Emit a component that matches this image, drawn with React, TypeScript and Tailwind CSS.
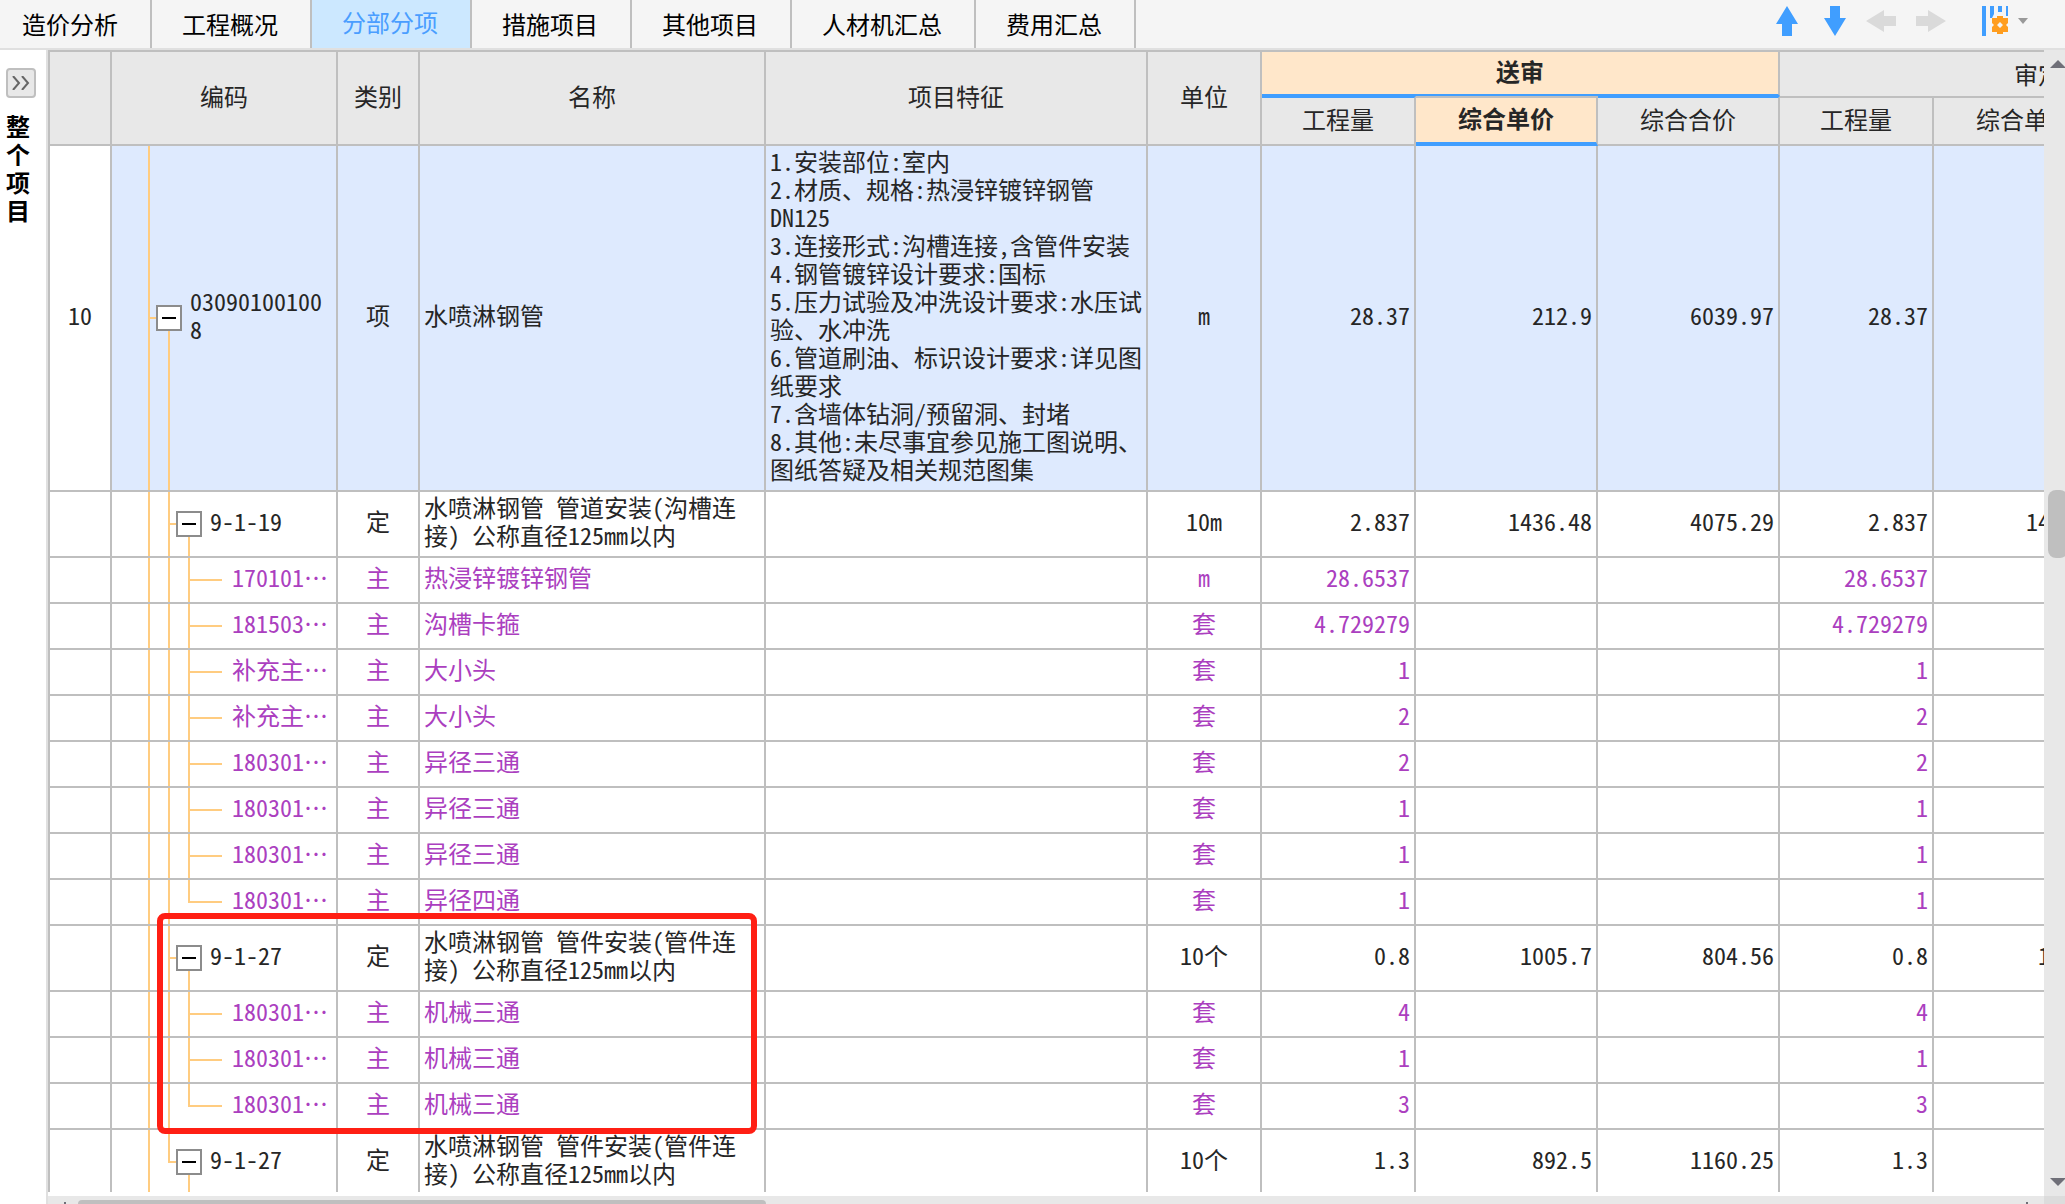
import type { ReactNode } from "react";

type Row = {
  no?: string;
  level: 1 | 2 | 3;
  code: string;
  kind: string;
  name: string;
  feature?: string;
  unit: string;
  qty: string;
  price?: string;
  total?: string;
  last?: boolean;
};

const tabs = ["造价分析", "工程概况", "分部分项", "措施项目", "其他项目", "人材机汇总", "费用汇总"];

const feature = `1.安装部位:室内
2.材质、规格:热浸锌镀锌钢管DN125
3.连接形式:沟槽连接,含管件安装
4.钢管镀锌设计要求:国标
5.压力试验及冲洗设计要求:水压试验、水冲洗
6.管道刷油、标识设计要求:详见图纸要求
7.含墙体钻洞/预留洞、封堵
8.其他:未尽事宜参见施工图说明、图纸答疑及相关规范图集`;

const rows: Row[] = [
  { no: "10", level: 1, code: "030901001008", kind: "项", name: "水喷淋钢管", feature, unit: "m", qty: "28.37", price: "212.9", total: "6039.97" },
  { level: 2, code: "9-1-19", kind: "定", name: "水喷淋钢管 管道安装(沟槽连接) 公称直径125mm以内", unit: "10m", qty: "2.837", price: "1436.48", total: "4075.29" },
  { level: 3, code: "170101⋯", kind: "主", name: "热浸锌镀锌钢管", unit: "m", qty: "28.6537" },
  { level: 3, code: "181503⋯", kind: "主", name: "沟槽卡箍", unit: "套", qty: "4.729279" },
  { level: 3, code: "补充主⋯", kind: "主", name: "大小头", unit: "套", qty: "1" },
  { level: 3, code: "补充主⋯", kind: "主", name: "大小头", unit: "套", qty: "2" },
  { level: 3, code: "180301⋯", kind: "主", name: "异径三通", unit: "套", qty: "2" },
  { level: 3, code: "180301⋯", kind: "主", name: "异径三通", unit: "套", qty: "1" },
  { level: 3, code: "180301⋯", kind: "主", name: "异径三通", unit: "套", qty: "1" },
  { level: 3, code: "180301⋯", kind: "主", name: "异径四通", unit: "套", qty: "1", last: true },
  { level: 2, code: "9-1-27", kind: "定", name: "水喷淋钢管 管件安装(管件连接) 公称直径125mm以内", unit: "10个", qty: "0.8", price: "1005.7", total: "804.56" },
  { level: 3, code: "180301⋯", kind: "主", name: "机械三通", unit: "套", qty: "4" },
  { level: 3, code: "180301⋯", kind: "主", name: "机械三通", unit: "套", qty: "1" },
  { level: 3, code: "180301⋯", kind: "主", name: "机械三通", unit: "套", qty: "3", last: true },
  { level: 2, code: "9-1-27", kind: "定", name: "水喷淋钢管 管件安装(管件连接) 公称直径125mm以内", unit: "10个", qty: "1.3", price: "892.5", total: "1160.25", last: true },
];

const heights = { 1: "h-[346px]", 2: "h-[66px]", 3: "h-[46px]" };

function Elbow({ width, last }: { width: string; last?: boolean }) {
  return (
    <span className={`flex shrink-0 flex-col ${width}`}>
      <span className="flex-1 border-b-2 border-l-2 border-[#ffcc80]" />
      <span className={`flex-1 ${last ? "" : "border-l-2 border-[#ffcc80]"}`} />
    </span>
  );
}

function Guide() {
  return <span className="w-5 shrink-0 border-l-2 border-[#ffcc80]" />;
}

function Toggle({ code }: { code: string }) {
  return (
    <span className="flex w-[26px] shrink-0 flex-col items-center">
      <span className="flex-1" />
      <button
        type="button"
        aria-label={`折叠 ${code}`}
        className="flex size-[26px] items-center justify-center border-2 border-[#8c8c8c] bg-white"
      >
        <span className="h-0.5 w-3.5 bg-black" />
      </button>
      <span className="w-0.5 flex-1 bg-[#ffcc80]" />
    </span>
  );
}

function CodeCell({ row }: { row: Row }) {
  return (
    <div className="flex h-full pl-9">
      {row.level > 1 && <Guide />}
      {row.level > 2 && <Guide />}
      {row.level === 3 ? (
        <Elbow width="w-[34px]" last={row.last} />
      ) : (
        <>
          <Elbow width="w-2" last={row.last} />
          <Toggle code={row.code} />
        </>
      )}
      <span className={`self-center pr-1 pb-1.5 break-all ${row.level === 3 ? "pl-2.5 whitespace-nowrap" : "pl-2"}`}>
        {row.code}
      </span>
    </div>
  );
}

function Cell({ children, className = "" }: { children?: ReactNode; className?: string }) {
  return <td className={`border-r-2 border-b-2 border-[#bfbfbf] px-1 pt-0 pb-1.5 ${className}`}>{children}</td>;
}

function Head({ children, className = "" }: { children?: ReactNode; className?: string }) {
  return (
    <th rowSpan={2} className={`border-r-2 border-b-2 border-[#bfbfbf] bg-[#e8e8e8] p-0 pb-1 font-normal ${className}`}>
      {children}
    </th>
  );
}

function SubHead({ children, className }: { children: ReactNode; className: string }) {
  return <th className={`h-[50px] border-r-2 p-0 pb-1 ${className}`}>{children}</th>;
}

function Toolbar() {
  return (
    <div className="ml-auto flex h-full items-start pt-1.5 pr-[37px]">
      <button type="button" aria-label="上移" className="mr-[26px]">
        <svg width="22" height="30" viewBox="0 0 22 30" fill="#409eff">
          <path d="M11 0 22 18H16V30H6V18H0Z" />
        </svg>
      </button>
      <button type="button" aria-label="下移" className="mr-5">
        <svg width="22" height="30" viewBox="0 0 22 30" fill="#409eff">
          <path d="M11 30 0 12H6V0H16V12H22Z" />
        </svg>
      </button>
      <button type="button" aria-label="升级" className="mt-1 mr-5">
        <svg width="30" height="22" viewBox="0 0 30 22" fill="#dadada">
          <path d="M0 11 18 0V6H30V16H18V22Z" />
        </svg>
      </button>
      <button type="button" aria-label="降级" className="mt-1 mr-9">
        <svg width="30" height="22" viewBox="0 0 30 22" fill="#dadada">
          <path d="M30 11 12 0V6H0V16H12V22Z" />
        </svg>
      </button>
      <button type="button" aria-label="列设置" className="flex">
        <svg width="26" height="30" viewBox="0 0 26 30">
          <path d="M0 0h4v30H0zM8 0h4v8l-2 4H8zM16 0h4v6h-4zM24 0h2v10h-2z" fill="#409eff" />
          <path
            fillRule="evenodd"
            d="M15 10h6v2h5v5l-2 2 2 2v5h-5v2h-6v-2h-5v-5l2-2-2-2v-5h5zM18 16l-3 3 3 3 3-3z"
            fill="#ff9d1e"
          />
        </svg>
        <svg width="10" height="6" viewBox="0 0 10 6" fill="#999" className="mt-3 ml-2.5">
          <path d="M0 0H10L5 6Z" />
        </svg>
      </button>
    </div>
  );
}

function SideRail() {
  return (
    <aside className="flex w-12 shrink-0 flex-col border-r-2 border-[#e0e0e0] bg-white pt-[18px] pl-1.5">
      <button
        type="button"
        aria-label="展开"
        className="flex size-[30px] items-center justify-center rounded border-2 border-[#bfbfbf] bg-[#e8e8e8]"
      >
        <svg width="18" height="14" viewBox="0 0 18 14" fill="none" stroke="#666" strokeWidth="2">
          <path d="M1 0 7 7 1 14M10 0 16 7 10 14" />
        </svg>
      </button>
      <span className="mt-3.5 w-6 leading-7 font-bold text-black">整个项目</span>
    </aside>
  );
}

function CostTable() {
  return (
    <table className="w-[2250px] table-fixed border-separate border-spacing-0 border-t-2 border-l-2 border-[#bfbfbf]">
      <colgroup>
        <col className="w-[62px]" />
        <col className="w-[226px]" />
        <col className="w-[82px]" />
        <col className="w-[346px]" />
        <col className="w-[382px]" />
        <col className="w-[114px]" />
        <col className="w-[154px]" />
        <col className="w-[182px]" />
        <col className="w-[182px]" />
        <col className="w-[154px]" />
        <col className="w-[182px]" />
        <col className="w-[182px]" />
      </colgroup>
      <thead>
        <tr>
          <Head />
          <Head>编码</Head>
          <Head>类别</Head>
          <Head>名称</Head>
          <Head>项目特征</Head>
          <Head>单位</Head>
          <th
            colSpan={3}
            className="h-11 border-r-2 border-b-2 border-r-[#bfbfbf] border-b-[#409eff] bg-[#ffe7ca] p-0 pb-1 font-bold"
          >
            送审
          </th>
          <th colSpan={3} className="h-11 border-r-2 border-[#bfbfbf] bg-[#e8e8e8] p-0 font-normal">
            审定
          </th>
        </tr>
        <tr>
          <SubHead className="border-y-2 border-[#bfbfbf] border-t-[#409eff] bg-[#e8e8e8] font-normal">工程量</SubHead>
          <SubHead className="border-t-2 border-b-4 border-[#bfbfbf] border-b-[#409eff] bg-[#ffe7ca] font-bold">综合单价</SubHead>
          <SubHead className="border-y-2 border-[#bfbfbf] border-t-[#409eff] bg-[#e8e8e8] font-normal">综合合价</SubHead>
          <SubHead className="border-y-2 border-[#bfbfbf] bg-[#e8e8e8] font-normal">工程量</SubHead>
          <SubHead className="border-y-2 border-[#bfbfbf] bg-[#e8e8e8] font-normal">综合单价</SubHead>
          <SubHead className="border-y-2 border-[#bfbfbf] bg-[#e8e8e8] font-normal">综合合价</SubHead>
        </tr>
      </thead>
      <tbody>
        {rows.map((row, i) => (
          <tr
            key={i}
            className={`${heights[row.level]} ${row.level === 1 ? "bg-[#deeafe]" : "bg-white"} ${row.level === 3 ? "text-[#ab3fbf]" : ""}`}
          >
            <Cell className="bg-white text-center">{row.no}</Cell>
            <td className="h-px border-r-2 border-b-2 border-[#bfbfbf] p-0">
              <CodeCell row={row} />
            </td>
            <Cell className="text-center">{row.kind}</Cell>
            <Cell>{row.name}</Cell>
            <Cell className="whitespace-pre-line">{row.feature}</Cell>
            <Cell className="text-center">{row.unit}</Cell>
            <Cell className="text-right">{row.qty}</Cell>
            <Cell className="text-right">{row.price}</Cell>
            <Cell className="text-right">{row.total}</Cell>
            <Cell className="text-right">{row.qty}</Cell>
            <Cell className="text-right">{row.price}</Cell>
            <Cell className="text-right">{row.total}</Cell>
          </tr>
        ))}
      </tbody>
    </table>
  );
}

export default function App() {
  return (
    <div className="flex h-screen flex-col overflow-hidden bg-white font-['Noto_Sans_CJK_SC',sans-serif] text-2xl leading-7 text-[#262626] [font-feature-settings:'hwid']">
      <header className="flex h-[50px] shrink-0 border-b-2 border-[#e0e0e0] bg-[#f5f5f5]">
        <nav className="flex">
          {tabs.map((tab) => (
            <button
              key={tab}
              type="button"
              className={`border-r-2 border-[#bfbfbf] pr-8 pl-[30px] first:pl-[22px] ${
                tab === "分部分项" ? "bg-[#cce8ff] pb-1 text-[#4a9eff]" : "text-black"
              }`}
            >
              {tab}
            </button>
          ))}
        </nav>
        <Toolbar />
      </header>
      <div className="flex min-h-0 flex-1">
        <SideRail />
        <main className="flex min-w-0 flex-1 flex-col">
          <div className="flex min-h-0 flex-1">
            <div className="relative mb-1 min-w-0 flex-1 overflow-hidden">
              <CostTable />
              <div className="absolute top-[863px] left-[109px] h-[221px] w-[600px] rounded-lg border-6 border-[#ff1f14]" />
            </div>
            <div className="flex w-[21px] shrink-0 flex-col overflow-hidden bg-[#e8e8e8] pt-2.5 pb-2.5 pl-1">
              <svg width="16" height="8" viewBox="0 0 16 8" fill="#6f6f78" className="ml-0.5 shrink-0">
                <path d="M0 8 8 0 16 8Z" />
              </svg>
              <div className="mt-[422px] h-[68px] w-5 rounded-lg bg-[#bfbfbf]" />
              <svg width="16" height="8" viewBox="0 0 16 8" fill="#6f6f78" className="mt-auto ml-0.5 shrink-0">
                <path d="M0 0H16L8 8Z" />
              </svg>
            </div>
          </div>
          <div className="flex h-2 shrink-0 items-end overflow-hidden bg-[#e8e8e8]">
            <span className="ml-4 h-0.5 w-0.5 bg-[#6f6f78]" />
            <div className="ml-3 h-1 w-[688px] rounded-t bg-[#bfbfbf]" />
            <span className="mr-4 ml-auto h-0.5 w-0.5 bg-[#6f6f78]" />
            <div className="h-2 w-[21px] bg-[#dcdcdc]" />
          </div>
        </main>
      </div>
    </div>
  );
}
